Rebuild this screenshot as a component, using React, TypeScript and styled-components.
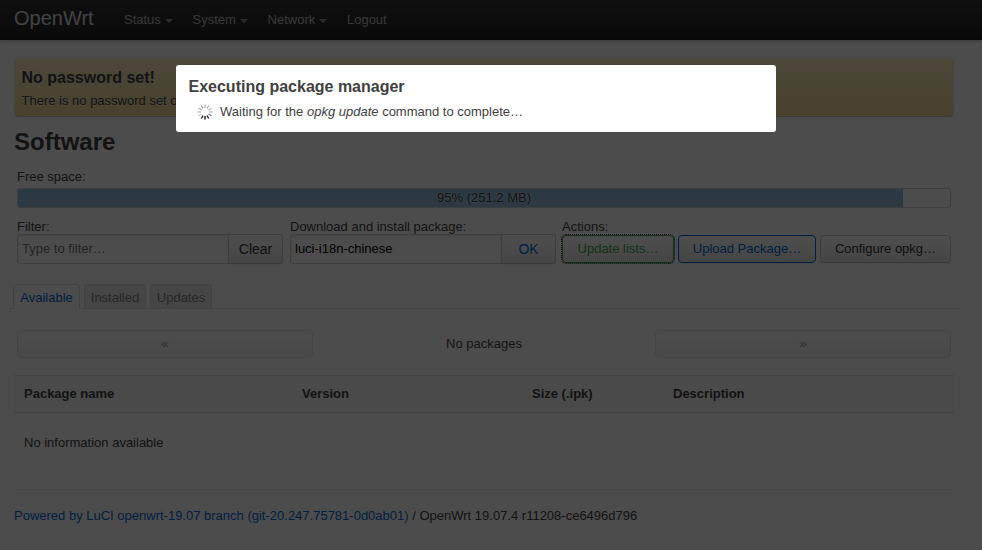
import React from "react";
import styled, { createGlobalStyle, css } from "styled-components";

const GlobalStyle = createGlobalStyle`
  *, *::before, *::after { box-sizing: border-box; }
  html, body { margin: 0; padding: 0; background: #fff; }
  body {
    overflow: hidden;
    color: #404040;
    font: 13px/18px "Liberation Sans", Arial, sans-serif;
  }
  button, input { font-family: inherit; }
  h2, h4, p { margin: 0; }
`;

const Page = styled.div`
  height: 550px;
`;

const Header = styled.header`
  display: flex;
  align-items: center;
  height: 40px;
  padding: 0 14px;
  color: #bfbfbf;
  background: linear-gradient(#333, #222);
  box-shadow: 0 1px 3px rgba(0, 0, 0, 0.25), inset 0 -1px 0 rgba(0, 0, 0, 0.1);
`;

const Brand = styled.a`
  width: 110px;
  padding-bottom: 4px;
  color: #fff;
  font-size: 20px;
  line-height: 22px;
  opacity: 0.85;
`;

const Nav = styled.nav`
  display: flex;
  gap: 19.7px;
`;

const NavItem = styled.a`
  display: flex;
  align-items: center;
  gap: 4px;
`;

const Caret = styled.i`
  border: 4px solid transparent;
  border-top-color: #bfbfbf;
  border-bottom: 0;
  opacity: 0.7;
  margin-top: 1px;
`;

const Content = styled.main`
  width: 940px;
  margin: 18px 0 0 14px;
`;

const Alert = styled.section`
  height: 59px;
  padding: 8px 7px 0 6.5px;
  border: 1px solid;
  border-color: rgba(0, 0, 0, 0.1) rgba(0, 0, 0, 0.1) rgba(0, 0, 0, 0.25);
  border-radius: 4px;
  background: linear-gradient(#fceec1, #eedc94) padding-box;
  background-color: #eedc94;
  box-shadow: inset 0 1px 0 rgba(255, 255, 255, 0.25);
  text-shadow: 0 1px 0 rgba(255, 255, 255, 0.5);
  p { margin-top: 3px; }
`;

const Subheading = styled.h4`
  font-size: 16px;
  line-height: 22px;
`;

const Title = styled.h2`
  height: 44px;
  margin-top: 7px;
  font-size: 24px;
  line-height: 36px;
`;

const Controls = styled.div`
  padding: 0 3px;
`;

const Label = styled.label`
  display: block;
  height: 16px;
  line-height: 18px;
`;

const Progress = styled.div`
  display: grid;
  width: 934px;
  height: 20px;
  margin: 4px 0 10px;
  border: 1px solid #ccc;
  border-radius: 3px;
  overflow: hidden;
`;

const ProgressFill = styled.div`
  grid-area: 1 / 1;
  background: #90c0e0;
`;

const ProgressText = styled.span`
  grid-area: 1 / 1;
  text-align: center;
  line-height: 18px;
  text-shadow: 0 0 2px #eee;
`;

const ControlRow = styled.div`
  display: grid;
  grid-template-columns: 266px 266px 390px;
  column-gap: 7px;
  & > :last-child { margin-left: -1px; }
`;

const Group = styled.div`
  display: flex;
  height: 30px;
`;

const Actions = styled.div`
  display: flex;
  gap: 4px;
  margin-top: 1px;
`;

const TextInput = styled.input`
  flex: none;
  width: 212px;
  height: 30px;
  padding: 0 4px 2px;
  color: #000;
  font-size: 13px;
  background: #fff;
  border: 1px solid #ccc;
  border-radius: 3px 0 0 3px;
  box-shadow: inset 0 1px 3px rgba(0, 0, 0, 0.1);
  &::placeholder { color: #757575; opacity: 1; }
`;

const tones = {
  plain: { text: "#333", border: "#ccc" },
  link: { text: "#0069d6", border: "#ccc" },
  action: { text: "#0069d6", border: "#0069d6" },
  apply: { text: "#46a546", border: "#46a546" },
};

const Button = styled.button<{
  $tone?: keyof typeof tones;
  $width: number;
  $attached?: boolean;
  $focused?: boolean;
}>`
  flex: none;
  width: ${(p) => p.$width}px;
  height: 28px;
  padding: 0 0 1px;
  font-size: 13px;
  line-height: 18px;
  text-align: center;
  text-shadow: 0 1px 1px rgba(255, 255, 255, 0.75);
  color: ${(p) => tones[p.$tone ?? "plain"].text};
  border: 1px solid ${(p) => tones[p.$tone ?? "plain"].border};
  border-bottom-color: ${(p) => (!p.$tone || p.$tone === "link" ? "#bbb" : tones[p.$tone].border)};
  border-radius: 4px;
  background: linear-gradient(#fff, #fff 25%, #e6e6e6);
  box-shadow: inset 0 1px 0 rgba(255, 255, 255, 0.2), 0 1px 2px rgba(0, 0, 0, 0.05);
  ${(p) =>
    p.$attached &&
    css`
      height: 30px;
      margin-left: -1px;
      padding: 0;
      font-size: 14px;
      border-radius: 0 3px 3px 0;
    `}
  ${(p) => p.$focused && css`outline: 1px dotted #222;`}
  &:disabled {
    border-color: #ccc;
    opacity: 0.5;
  }
`;

const Tabs = styled.div`
  display: flex;
  gap: 4px;
  width: 950px;
  height: 25px;
  margin: 20px 0 0 -5px;
  padding-left: 4px;
  border-bottom: 1px solid #ddd;
`;

const Tab = styled.a<{ $active?: boolean; $width: number }>`
  width: ${(p) => p.$width}px;
  height: ${(p) => (p.$active ? 25 : 24)}px;
  text-align: center;
  line-height: 25px;
  color: ${(p) => (p.$active ? "#0069d6" : "#808080")};
  background: ${(p) => (p.$active ? "#fff" : "#e9e9e9")};
  border: 1px solid #ddd;
  border-bottom: 0;
  border-radius: 4px 4px 0 0;
`;

const Pager = styled.div`
  display: flex;
  justify-content: space-between;
  align-items: center;
  width: 934px;
  margin: 21px 3px 17px;
`;

const Table = styled.div`
  border-top: 1px solid #ddd;
`;

const HeadRow = styled.div`
  display: grid;
  grid-template-columns: 278px 230px 141px 1fr;
  height: 37px;
  padding-left: 10px;
  line-height: 36px;
  font-weight: bold;
  background: #f9f9f9;
  border-bottom: 1px solid #ddd;
`;

const EmptyRow = styled.div`
  height: 76px;
  padding: 21px 10px 0;
`;

const Footer = styled.footer`
  padding-top: 17px;
  border-top: 1px solid #eee;
`;

const FooterLink = styled.a`
  color: #0069d6;
`;

const Overlay = styled.div`
  position: fixed;
  inset: 0;
  padding: 65px 206px 0 176px;
  background: rgba(0, 0, 0, 0.7);
`;

const Modal = styled.div`
  height: 67px;
  padding: 11px 12px 0 12.5px;
  background: #fff;
  border-radius: 3px;
`;

const Waiting = styled.p`
  && { margin-top: 5px; }
  display: flex;
  align-items: center;
  gap: 7px;
  padding-left: 8.5px;
`;

const spokes = [
  "#b0b0b0", "#a6a6a6", "#b0b0b0", "#b4b4b4", "#777", "#111",
  "#000", "#111", "#c6c6c6", "#bbb", "#b0b0b0", "#a0a0a0",
];

const Spinner = () => (
  <svg width="16" height="16" viewBox="0 0 16 16">
    {spokes.map((color, i) => (
      <line
        key={i}
        x1="8"
        y1="0.5"
        x2="8"
        y2="4"
        stroke={color}
        strokeWidth="1.3"
        transform={`rotate(${i * 30} 8 8)`}
      />
    ))}
  </svg>
);

export default function App() {
  return (
    <>
      <GlobalStyle />
      <Page>
        <Header>
          <Brand>OpenWrt</Brand>
          <Nav>
            {["Status", "System", "Network"].map((name) => (
              <NavItem key={name}>
                {name}
                <Caret />
              </NavItem>
            ))}
            <NavItem>Logout</NavItem>
          </Nav>
        </Header>
        <Content>
          <Alert>
            <Subheading>No password set!</Subheading>
            <p>There is no password set on this router.</p>
          </Alert>
          <Title>Software</Title>
          <Controls>
            <Label>Free space:</Label>
            <Progress>
              <ProgressFill style={{ width: "95%" }} />
              <ProgressText>95% (251.2 MB)</ProgressText>
            </Progress>
            <ControlRow>
              <div>
                <Label>Filter:</Label>
                <Group>
                  <TextInput placeholder="Type to filter…" />
                  <Button $attached $width={55}>Clear</Button>
                </Group>
              </div>
              <div>
                <Label>Download and install package:</Label>
                <Group>
                  <TextInput defaultValue="luci-i18n-chinese" />
                  <Button $attached $tone="link" $width={55}>OK</Button>
                </Group>
              </div>
              <div>
                <Label>Actions:</Label>
                <Actions>
                  <Button $tone="apply" $focused $width={112}>Update lists…</Button>
                  <Button $tone="action" $width={138}>Upload Package…</Button>
                  <Button $width={131}>Configure opkg…</Button>
                </Actions>
              </div>
            </ControlRow>
          </Controls>
          <Tabs>
            <Tab $active $width={67}>Available</Tab>
            <Tab $width={62}>Installed</Tab>
            <Tab $width={62}>Updates</Tab>
          </Tabs>
          <Pager>
            <Button disabled $width={296}>«</Button>
            <span>No packages</span>
            <Button disabled $width={296}>»</Button>
          </Pager>
          <Table>
            <HeadRow>
              <span>Package name</span>
              <span>Version</span>
              <span>Size (.ipk)</span>
              <span>Description</span>
            </HeadRow>
            <EmptyRow>No information available</EmptyRow>
          </Table>
          <Footer>
            <FooterLink>Powered by LuCI openwrt-19.07 branch (git-20.247.75781-0d0ab01)</FooterLink>
            {" / OpenWrt 19.07.4 r11208-ce6496d796"}
          </Footer>
        </Content>
      </Page>
      <Overlay>
        <Modal>
          <Subheading>Executing package manager</Subheading>
          <Waiting>
            <Spinner />
            <span>
              Waiting for the <em>opkg update</em> command to complete…
            </span>
          </Waiting>
        </Modal>
      </Overlay>
    </>
  );
}
